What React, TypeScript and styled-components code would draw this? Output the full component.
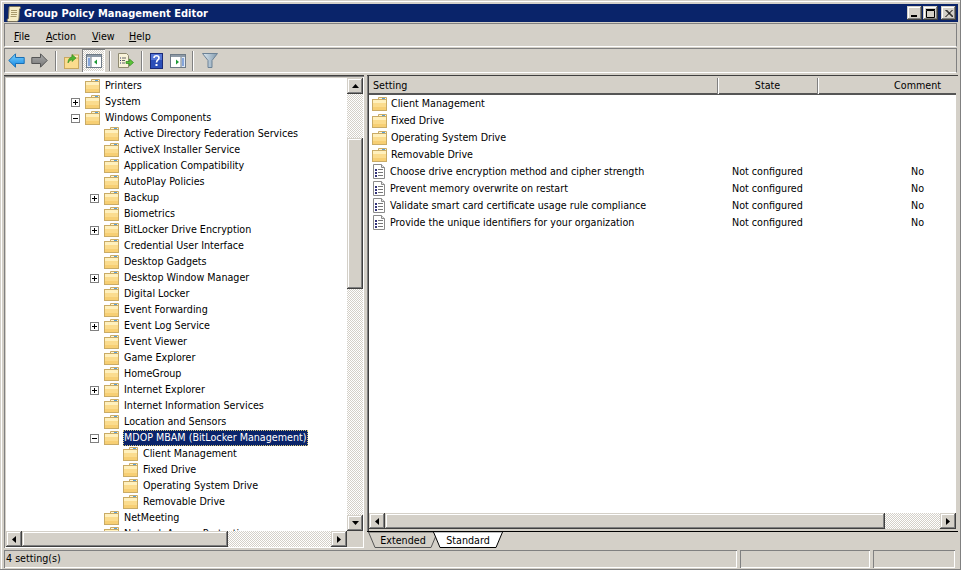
import styled, { createGlobalStyle } from "styled-components"

const GlobalStyle = createGlobalStyle`
  html, body {
    margin: 0;
    padding: 0;
    background: #d4d0c8;
    overflow: hidden;
  }
  * {
    box-sizing: border-box;
  }
`

const raised = `box-shadow: inset -1px -1px #404040, inset 1px 1px #d4d0c8, inset -2px -2px #808080, inset 2px 2px #fff;`
const dither = `background: repeating-conic-gradient(#d4d0c8 0 25%, #fff 0 50%) 0 0 / 2px 2px;`

const Window = styled.div`
  width: 961px;
  height: 570px;
  padding: 4px 3px 0 4px;
  display: flex;
  flex-direction: column;
  background: #d4d0c8;
  color: #000;
  font-family: "DejaVu Sans", Tahoma, sans-serif;
  font-stretch: condensed;
  font-size: 10.65px;
  box-shadow: inset -1px -1px #808080, inset 1px 1px #d4d0c8, inset 2px 2px #fff;
  overflow: hidden;
`

const TitleBar = styled.div`
  height: 18px;
  flex: none;
  display: flex;
  align-items: center;
  gap: 2px;
  padding: 0 2px;
  background: #0a246a;
  color: #fff;
`

const TitleText = styled.div`
  flex: 1;
  font-family: "DejaVu Sans", Tahoma, sans-serif;
  font-weight: 700;
  font-size: 11px;
`

const CaptionButton = styled.div<{ $gap?: number }>`
  width: 15px;
  height: 14px;
  margin-left: ${p => p.$gap ?? -1}px;
  display: flex;
  align-items: center;
  justify-content: center;
  background: #d4d0c8;
  ${raised}
`

const Band = styled.div<{ $height: number }>`
  height: ${p => p.$height}px;
  flex: none;
  margin: 1px 1px 0 0;
  display: flex;
  align-items: center;
  border: 1px solid #808080;
  border-bottom-color: #fff;
`

const MenuItem = styled.div<{ $width: number }>`
  width: ${p => p.$width}px;
  padding-top: 3px;
  &:first-child {
    margin-left: 9px;
  }
  u {
    text-underline-offset: 1px;
  }
`

const ToolIcon = styled.div<{ $active?: boolean; $left: number }>`
  width: ${p => (p.$active ? 23 : 17)}px;
  height: 23px;
  margin-left: ${p => p.$left}px;
  flex: none;
  display: flex;
  align-items: center;
  justify-content: center;
  ${p => (p.$active ? `${dither} box-shadow: inset 1px 1px #808080, inset -1px -1px #fff;` : "")}
`

const ToolSep = styled.div<{ $left: number }>`
  width: 1px;
  height: 20px;
  margin-left: ${p => p.$left}px;
  flex: none;
  background: #808080;
  box-shadow: 1px 0 #fff;
`

const Panes = styled.div`
  height: 474px;
  flex: none;
  margin-top: 2px;
  display: flex;
`

const TreePane = styled.div`
  width: 360px;
  height: 473px;
  flex: none;
  padding: 2px 1px 2px 2px;
  display: grid;
  grid-template-columns: 341px 16px;
  grid-template-rows: 453px 16px;
  box-shadow: inset 1px 1px #808080, inset -1px -1px #fff;
  border-top: 1px solid #404040;
`

const TreeView = styled.div`
  background: #fff;
  overflow: hidden;
`

const TreeRow = styled.div<{ $depth: number }>`
  height: 16px;
  padding-left: ${p => 64 + p.$depth * 19}px;
  display: flex;
  align-items: center;
  white-space: nowrap;
`

const ExpanderSlot = styled.div`
  width: 15px;
  flex: none;
  display: flex;
`

const Expander = styled.div<{ $open: boolean }>`
  width: 9px;
  height: 9px;
  margin-left: 1px;
  border: 1px solid #808080;
  background:
    linear-gradient(#000, #000) center / 5px 1px no-repeat
    ${p => (p.$open ? "" : ", linear-gradient(#000, #000) center / 1px 5px no-repeat")};
`

const TreeLabel = styled.span<{ $selected?: boolean }>`
  margin-left: 4px;
  padding: 0 2px 0 1px;
  height: 16px;
  line-height: 15px;
  ${p => p.$selected ? "background: #0a246a; color: #fff; outline: 1px dotted #d8c878; outline-offset: -1px;" : ""}
`

const ScrollV = styled.div`
  display: flex;
  flex-direction: column;
  ${dither}
`

const ScrollH = styled.div`
  display: flex;
  ${dither}
`

const ScrollBtn = styled.div<{ $w: number; $h: number }>`
  width: ${p => p.$w}px;
  height: ${p => p.$h}px;
  flex: none;
  display: flex;
  align-items: center;
  justify-content: center;
  background: #d4d0c8;
  ${raised}
`

const Thumb = styled.div<{ $size: number; $start: number; $vertical?: boolean }>`
  flex: none;
  background: #d4d0c8;
  ${raised}
  ${p => p.$vertical
    ? `height: ${p.$size}px; margin-top: ${p.$start}px;`
    : `width: ${p.$size}px; margin-left: ${p.$start}px;`}
`

const Spacer = styled.div`
  flex: 1;
`

const Corner = styled.div`
  background: #d4d0c8;
`

const RightPane = styled.div`
  width: 591px;
  height: 473px;
  margin-left: 3px;
  flex: none;
  display: flex;
  flex-direction: column;
`

const ListFrame = styled.div`
  height: 456px;
  flex: none;
  padding: 2px 2px 2px 2px;
  display: flex;
  flex-direction: column;
  border-top: 1px solid #404040;
  box-shadow: inset 1px 0 #808080, inset 2px 0 #404040;
`

const ListView = styled.div`
  flex: 1;
  background: #fff;
  display: flex;
  flex-direction: column;
`

const Columns = styled.div`
  display: grid;
  grid-template-columns: 349px 100px 1fr;
`

const HeaderRow = styled(Columns)`
  height: 17px;
  flex: none;
  background: #d4d0c8;
  border-bottom: 2px solid #555;
`

const HeaderCell = styled.div<{ $align: string }>`
  padding: ${p => (p.$align === "center" ? "0" : "0 15px 0 4px")};
  line-height: 16px;
  text-align: ${p => p.$align};
  border-right: 1px solid #808080;
  box-shadow: 1px 0 #fff;
  &:last-child {
    border-right: 0;
    box-shadow: none;
  }
`

const ListRow = styled(Columns)`
  height: 17px;
  flex: none;
  align-items: center;
  white-space: nowrap;
`

const NameCell = styled.div`
  display: flex;
  align-items: center;
  gap: 4px;
  padding-left: 3px;
`

const StateCell = styled.div`
  padding-left: 14px;
`

const CommentCell = styled.div`
  padding-left: 93px;
`

const ListScroll = styled(ScrollH)`
  height: 16px;
  flex: none;
`

const TabStrip = styled.div`
  height: 17px;
  flex: none;
  display: flex;
  border-top: 1px solid #000;
`

const Tab = styled.div<{ $active?: boolean }>`
  position: relative;
  width: 70px;
  height: 16px;
  margin-left: ${p => (p.$active ? -5 : 1)}px;
  z-index: ${p => (p.$active ? 1 : 0)};
  display: flex;
  align-items: center;
  justify-content: center;
  svg {
    position: absolute;
    inset: 0;
  }
  span {
    position: relative;
  }
`

const StatusBar = styled.div`
  height: 19px;
  flex: none;
  margin-top: 1px;
  display: flex;
  gap: 3px;
  padding-right: 2px;
`

const StatusPanel = styled.div<{ $width: number }>`
  width: ${p => p.$width}px;
  height: 18px;
  flex: none;
  padding-left: 2px;
  line-height: 17px;
  box-shadow: inset 1px 1px #808080, inset -1px -1px #fff;
`

const FolderIcon = () => (
  <svg width="15" height="14" viewBox="0 0 15 14" style={{ flex: "none" }}>
    <path d="M6.5 3V.5h8V3z" fill="#fff6d8" stroke="#c9ab66" />
    <rect x="10" y="1" width="3" height="1" fill="#5aa0d8" />
    <rect x=".5" y="2.5" width="14" height="11" fill="#fbdc8e" stroke="#c9ab66" />
    <rect x="1" y="3" width="13" height="3" fill="#fff0bd" />
    <rect x="1" y="10" width="13" height="3" fill="#f7cf74" />
  </svg>
)

const PolicyIcon = () => (
  <svg width="14" height="15" viewBox="0 0 14 15" style={{ flex: "none" }}>
    <path d="M1.5.5h8l3 3v11h-11z" fill="#fff" stroke="#8a8a8a" />
    <path d="M9.5.5v3h3" fill="#e4e4e4" stroke="#8a8a8a" />
    <path d="M3 5h2v2H3zM3 8h2v2H3zM3 11h2v2H3z" fill="#34347c" />
    <path d="M6 5.5h5M6 8.5h5M6 11.5h5" stroke="#777" />
  </svg>
)

const ScrollIcon = () => (
  <svg width="16" height="17" viewBox="0 0 16 17">
    <path d="M4 1.500h9.500c1.500 0 1.500 2.500 0 2.500L13 13c0 2-1 3.500-2.500 3.500H2.500C1 16.500.5 14 2.500 13.500L3 3c0-1 .3-1.500 1-1.500z" fill="#f6edc6" stroke="#77705a" />
    <path d="M5 5.500h6M5 7.500h6M5 9.500h6M4.500 11.500h6" stroke="#a89a6c" />
  </svg>
)

const Arrow = ({ dir }: { dir: "up" | "down" | "left" | "right" }) => {
  const points = {
    up: "0,4 7,4 3.5,0",
    down: "0,0 7,0 3.5,4",
    left: "4,0 4,7 0,3.5",
    right: "0,0 0,7 4,3.5",
  }[dir]
  const vertical = dir === "up" || dir === "down"
  return (
    <svg width={vertical ? 7 : 4} height={vertical ? 4 : 7}>
      <polygon points={points} fill="#000" />
    </svg>
  )
}

const BackIcon = () => (
  <svg width="17" height="15" viewBox="0 0 17 15">
    <defs>
      <linearGradient id="back" x1="0" y1="0" x2="0" y2="1">
        <stop offset="0" stopColor="#7fd2fb" />
        <stop offset="1" stopColor="#0f86e6" />
      </linearGradient>
    </defs>
    <path d="M.8 7.5 7.5.8v3.7h8.7v6H7.5v3.7z" fill="url(#back)" stroke="#1a6fb5" />
  </svg>
)

const ForwardIcon = () => (
  <svg width="17" height="15" viewBox="0 0 17 15">
    <defs>
      <linearGradient id="fwd" x1="0" y1="0" x2="0" y2="1">
        <stop offset="0" stopColor="#aaa" />
        <stop offset="1" stopColor="#777" />
      </linearGradient>
    </defs>
    <path d="M16.2 7.5 9.5.8v3.7H.8v6h8.700v3.700z" fill="url(#fwd)" stroke="#555" />
  </svg>
)

const UpFolderIcon = () => (
  <svg width="16" height="16" viewBox="0 0 16 16">
    <rect x=".5" y="4.500" width="14" height="11" fill="#fbdc8e" stroke="#c9a860" />
    <rect x="8" y="2" width="6.500" height="3" fill="#fff0bd" stroke="#c9a860" />
    <path d="M4 10c0-4 2-5.500 4-6V1.500L12 5 8 8.500V6.500C6.500 7 5 8 4 10z" fill="#4eb332" stroke="#2f8a1e" strokeWidth=".6" />
  </svg>
)

const WindowIcon = ({ flip }: { flip?: boolean }) => (
  <svg width="16" height="14" viewBox="0 0 16 14">
    <rect x=".5" y=".5" width="15" height="13" fill="#fff" stroke="#6e7a86" />
    <rect x="1" y="1" width="14" height="2" fill="#8d99a6" />
    <rect x={flip ? 11 : 1} y="3" width="4" height="10" fill="#dfe8f4" />
    <path d={flip ? "M12 5h2M12 7h2M12 9h2M12 11h2" : "M2 5h2M2 7h2M2 9h2M2 11h2"} stroke="#2c62c0" />
    <path d={flip ? "M11 3v10" : "M5 3v10"} stroke="#6e7a86" />
    <path d={flip ? "M6 5.500v5L9 8z" : "M11 5.500v5L8 8z"} fill="#1e9a35" />
  </svg>
)

const ExportIcon = () => (
  <svg width="17" height="16" viewBox="0 0 17 16">
    <path d="M1.500.500h8l2 2v12h-10z" fill="#f9f3d9" stroke="#8f8a70" />
    <path d="M3 5h1M3 7.500h1M3 10h1" stroke="#34347c" />
    <path d="M5 5h4M5 7.500h3M5 10h3" stroke="#666" />
    <path d="M9 8.500h3.500V6l4 3.500-4 3.500v-2.500H9z" fill="#5cc23a" stroke="#2f8a1e" strokeWidth=".7" />
  </svg>
)

const HelpIcon = () => (
  <svg width="13" height="16" viewBox="0 0 13 16">
    <rect x=".5" y=".5" width="12" height="15" fill="#2c4fb8" stroke="#1a2a78" />
    <rect x="1" y="1" width="11" height="6" fill="#5475d6" />
    <path d="M4 5c0-3 5-3 5 0 0 2-2.500 2-2.500 4.500" fill="none" stroke="#fff" strokeWidth="1.600" />
    <rect x="5.500" y="11" width="2" height="2" fill="#fff" />
  </svg>
)

const FilterIcon = () => (
  <svg width="16" height="15" viewBox="0 0 16 15">
    <defs>
      <linearGradient id="funnel" x1="0" y1="0" x2="1" y2="0">
        <stop offset="0" stopColor="#dfeaf2" />
        <stop offset="1" stopColor="#7f98ac" />
      </linearGradient>
    </defs>
    <path d="M.5.500h15L10 7.500v7H6v-7z" fill="url(#funnel)" stroke="#6c8296" />
  </svg>
)

const tree: { name: string; depth: number; toggle?: "open" | "closed"; selected?: boolean }[] = [
  { name: "Printers", depth: 0 },
  { name: "System", depth: 0, toggle: "closed" },
  { name: "Windows Components", depth: 0, toggle: "open" },
  { name: "Active Directory Federation Services", depth: 1 },
  { name: "ActiveX Installer Service", depth: 1 },
  { name: "Application Compatibility", depth: 1 },
  { name: "AutoPlay Policies", depth: 1 },
  { name: "Backup", depth: 1, toggle: "closed" },
  { name: "Biometrics", depth: 1 },
  { name: "BitLocker Drive Encryption", depth: 1, toggle: "closed" },
  { name: "Credential User Interface", depth: 1 },
  { name: "Desktop Gadgets", depth: 1 },
  { name: "Desktop Window Manager", depth: 1, toggle: "closed" },
  { name: "Digital Locker", depth: 1 },
  { name: "Event Forwarding", depth: 1 },
  { name: "Event Log Service", depth: 1, toggle: "closed" },
  { name: "Event Viewer", depth: 1 },
  { name: "Game Explorer", depth: 1 },
  { name: "HomeGroup", depth: 1 },
  { name: "Internet Explorer", depth: 1, toggle: "closed" },
  { name: "Internet Information Services", depth: 1 },
  { name: "Location and Sensors", depth: 1 },
  { name: "MDOP MBAM (BitLocker Management)", depth: 1, toggle: "open", selected: true },
  { name: "Client Management", depth: 2 },
  { name: "Fixed Drive", depth: 2 },
  { name: "Operating System Drive", depth: 2 },
  { name: "Removable Drive", depth: 2 },
  { name: "NetMeeting", depth: 1 },
  { name: "Network Access Protection", depth: 1 },
]

const folders = ["Client Management", "Fixed Drive", "Operating System Drive", "Removable Drive"]

const policies = [
  "Choose drive encryption method and cipher strength",
  "Prevent memory overwrite on restart",
  "Validate smart card certificate usage rule compliance",
  "Provide the unique identifiers for your organization",
]

const App = () => {
  return (
    <Window>
      <GlobalStyle />
      <TitleBar>
        <ScrollIcon />
        <TitleText>Group Policy Management Editor</TitleText>
        <CaptionButton>
          <svg width="9" height="10"><rect x="1" y="7" width="6" height="2" /></svg>
        </CaptionButton>
        <CaptionButton $gap={-1}>
          <svg width="9" height="9"><path d="M.5 1.500h8v7h-8zM0 .5h9" fill="none" stroke="#000" /></svg>
        </CaptionButton>
        <CaptionButton $gap={1}>
          <svg width="8" height="7"><path d="M.5 0l7 7M7.500 0l-7 7M1.500 0l7 7" fill="none" stroke="#000" /></svg>
        </CaptionButton>
      </TitleBar>

      <Band $height={24}>
        <MenuItem $width={32}><u>F</u>ile</MenuItem>
        <MenuItem $width={46}><u>A</u>ction</MenuItem>
        <MenuItem $width={37}><u>V</u>iew</MenuItem>
        <MenuItem $width={40}><u>H</u>elp</MenuItem>
      </Band>

      <Band $height={25}>
        <ToolIcon $left={3}><BackIcon /></ToolIcon>
        <ToolIcon $left={6}><ForwardIcon /></ToolIcon>
        <ToolSep $left={7} />
        <ToolIcon $left={7}><UpFolderIcon /></ToolIcon>
        <ToolIcon $left={2} $active><WindowIcon /></ToolIcon>
        <ToolSep $left={4} />
        <ToolIcon $left={7}><ExportIcon /></ToolIcon>
        <ToolSep $left={7} />
        <ToolIcon $left={6}><HelpIcon /></ToolIcon>
        <ToolIcon $left={4}><WindowIcon flip /></ToolIcon>
        <ToolSep $left={6} />
        <ToolIcon $left={8}><FilterIcon /></ToolIcon>
      </Band>

      <Panes>
        <TreePane>
          <TreeView>
            {tree.map(item => (
              <TreeRow key={item.name + item.depth} $depth={item.depth}>
                <ExpanderSlot>
                  {item.toggle && <Expander $open={item.toggle === "open"} />}
                </ExpanderSlot>
                <FolderIcon />
                <TreeLabel $selected={item.selected}>{item.name}</TreeLabel>
              </TreeRow>
            ))}
          </TreeView>
          <ScrollV>
            <ScrollBtn $w={16} $h={16}><Arrow dir="up" /></ScrollBtn>
            <Thumb $vertical $size={151} $start={44} />
            <Spacer />
            <ScrollBtn $w={16} $h={16}><Arrow dir="down" /></ScrollBtn>
          </ScrollV>
          <ScrollH>
            <ScrollBtn $w={16} $h={16}><Arrow dir="left" /></ScrollBtn>
            <Thumb $size={206} $start={0} />
            <Spacer />
            <ScrollBtn $w={16} $h={16}><Arrow dir="right" /></ScrollBtn>
          </ScrollH>
          <Corner />
        </TreePane>

        <RightPane>
          <ListFrame>
            <ListView>
              <HeaderRow>
                <HeaderCell $align="left">Setting</HeaderCell>
                <HeaderCell $align="center">State</HeaderCell>
                <HeaderCell $align="right">Comment</HeaderCell>
              </HeaderRow>
              {folders.map(name => (
                <ListRow key={name}>
                  <NameCell><FolderIcon />{name}</NameCell>
                </ListRow>
              ))}
              {policies.map(name => (
                <ListRow key={name}>
                  <NameCell><PolicyIcon /><span>{name}</span></NameCell>
                  <StateCell>Not configured</StateCell>
                  <CommentCell>No</CommentCell>
                </ListRow>
              ))}
              <Spacer />
              <ListScroll>
                <ScrollBtn $w={16} $h={16}><Arrow dir="left" /></ScrollBtn>
                <Thumb $size={500} $start={0} />
                <Spacer />
                <ScrollBtn $w={16} $h={16}><Arrow dir="right" /></ScrollBtn>
              </ListScroll>
            </ListView>
          </ListFrame>
          <TabStrip>
            <Tab>
              <svg width="70" height="16">
                <polygon points="0.5,0 69.500,0 63,15.500 7,15.500" fill="#d4d0c8" stroke="#555" />
              </svg>
              <span>Extended</span>
            </Tab>
            <Tab $active>
              <svg width="70" height="16">
                <polygon points="0.5,0 69.500,0 63,15.500 7,15.500" fill="#fff" stroke="#000" />
                <line x1="1" y1="0" x2="69" y2="0" stroke="#fff" />
              </svg>
              <span>Standard</span>
            </Tab>
          </TabStrip>
        </RightPane>
      </Panes>

      <StatusBar>
        <StatusPanel $width={733}>4 setting(s)</StatusPanel>
        <StatusPanel $width={130} />
        <StatusPanel $width={82} />
      </StatusBar>
    </Window>
  )
}

export default App
